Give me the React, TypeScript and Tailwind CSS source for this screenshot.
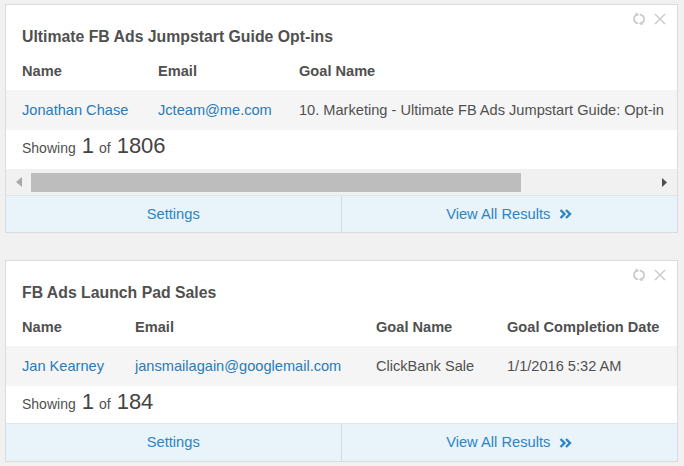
import React from 'react';

type Column = { label: string; width?: number };

interface WidgetProps {
  title: string;
  columns: Column[];
  row: { text: string; link?: boolean }[];
  total: number;
  scroll?: boolean;
  showingHeight: string;
  footerHeight: string;
}

function RefreshIcon() {
  return (
    <svg width="12" height="12" viewBox="0 0 12 12" fill="none" stroke="#c9c9c9" strokeWidth="1.7" strokeLinecap="round">
      <path d="M4.6 1.6 A4.5 4.5 0 0 0 4.6 10.4" />
      <path d="M7.4 10.4 A4.5 4.5 0 0 0 7.4 1.6" />
      <path d="M4.6 1.6 L3.2 0.8 M7.4 10.4 L8.8 11.2" />
    </svg>
  );
}

function CloseIcon() {
  return (
    <svg width="12" height="12" viewBox="0 0 12 12" fill="none" stroke="#c9c9c9" strokeWidth="1.3">
      <path d="M1 1 L11 11 M11 1 L1 11" />
    </svg>
  );
}

function Chevrons() {
  return (
    <svg width="13" height="10" viewBox="0 0 13 10" fill="none" stroke="#2f84c2" strokeWidth="2.4" strokeLinejoin="miter">
      <path d="M1.5 1 L5.5 5 L1.5 9" />
      <path d="M7 1 L11 5 L7 9" />
    </svg>
  );
}

function Scrollbar() {
  return (
    <div className="flex h-[26px] items-center bg-[#f1f1f1]">
      <div className="flex w-[25px] justify-center">
        <svg width="6" height="10" viewBox="0 0 6 10">
          <path d="M6 0 L0 5 L6 10 Z" fill="#a9a9a9" />
        </svg>
      </div>
      <div className="h-[19px] w-[490px] bg-[#bdbdbd]" />
      <div className="flex-1" />
      <div className="flex w-[25px] justify-center">
        <svg width="5" height="9" viewBox="0 0 5 9">
          <path d="M0 0 L5 4.5 L0 9 Z" fill="#4f4f4f" />
        </svg>
      </div>
    </div>
  );
}

function Widget({ title, columns, row, total, scroll, showingHeight, footerHeight }: WidgetProps) {
  return (
    <div className="relative w-[673px] border border-[#dcdcdc] bg-white">
      <div className="absolute right-[11px] top-[8px] flex items-center gap-[9px]">
        <RefreshIcon />
        <CloseIcon />
      </div>

      <h2 className="px-4 pt-[22px] text-[15.8px] font-bold leading-5 text-[#505050]">{title}</h2>

      <div className="overflow-hidden">
        <div className="flex h-[43px] pl-4 pt-[14px] text-[14.6px] font-bold leading-5 text-[#505050]">
          {columns.map((c) => (
            <div
              key={c.label}
              className="shrink-0 whitespace-nowrap"
              style={c.width ? { width: c.width } : undefined}
            >
              {c.label}
            </div>
          ))}
        </div>
        <div className="flex h-10 items-center bg-[#f5f5f5] pl-4 text-[14.6px] leading-5">
          {row.map((cell, i) => (
            <div
              key={i}
              className={`shrink-0 whitespace-nowrap ${cell.link ? 'text-[#2a7bb8]' : 'text-[#505050]'}`}
              style={columns[i].width ? { width: columns[i].width } : undefined}
            >
              {cell.text}
            </div>
          ))}
        </div>
      </div>

      <div className={`flex items-baseline pl-4 pt-[3px] text-[#505050] ${showingHeight}`}>
        <span className="text-[14px]">Showing</span>
        <span className="ml-[6px] text-[22px] leading-[26px] text-[#444]">1</span>
        <span className="ml-[5px] text-[14px]">of</span>
        <span className="ml-[6px] text-[22px] leading-[26px] text-[#444]">{total}</span>
      </div>

      {scroll && <Scrollbar />}

      <div className={`grid grid-cols-2 border-t border-[#dfe6eb] bg-[#e8f3fa] text-[14.7px] text-[#2f84c2] ${footerHeight}`}>
        <button className="flex items-center justify-center border-r border-[#d2dbe2]">Settings</button>
        <button className="flex items-center justify-center gap-[9px]">
          <span>View All Results</span>
          <Chevrons />
        </button>
      </div>
    </div>
  );
}

export default function App() {
  return (
    <div className="min-h-screen bg-[#f1f1f1] pl-[5px] pt-[4px] font-['Liberation_Sans',Arial,sans-serif]">
      <Widget
        title="Ultimate FB Ads Jumpstart Guide Opt-ins"
        columns={[
          { label: 'Name', width: 136 },
          { label: 'Email', width: 141 },
          { label: 'Goal Name' },
        ]}
        row={[
          { text: 'Jonathan Chase', link: true },
          { text: 'Jcteam@me.com', link: true },
          { text: '10. Marketing - Ultimate FB Ads Jumpstart Guide: Opt-in' },
        ]}
        total={1806}
        scroll
        showingHeight="h-[39px]"
        footerHeight="h-[37px]"
      />
      <div className="mt-[27px]">
        <Widget
          title="FB Ads Launch Pad Sales"
          columns={[
            { label: 'Name', width: 113 },
            { label: 'Email', width: 241 },
            { label: 'Goal Name', width: 131 },
            { label: 'Goal Completion Date' },
          ]}
          row={[
            { text: 'Jan Kearney', link: true },
            { text: 'jansmailagain@googlemail.com', link: true },
            { text: 'ClickBank Sale' },
            { text: '1/1/2016 5:32 AM' },
          ]}
          total={184}
          showingHeight="h-[37px]"
          footerHeight="h-[38px]"
        />
      </div>
    </div>
  );
}
